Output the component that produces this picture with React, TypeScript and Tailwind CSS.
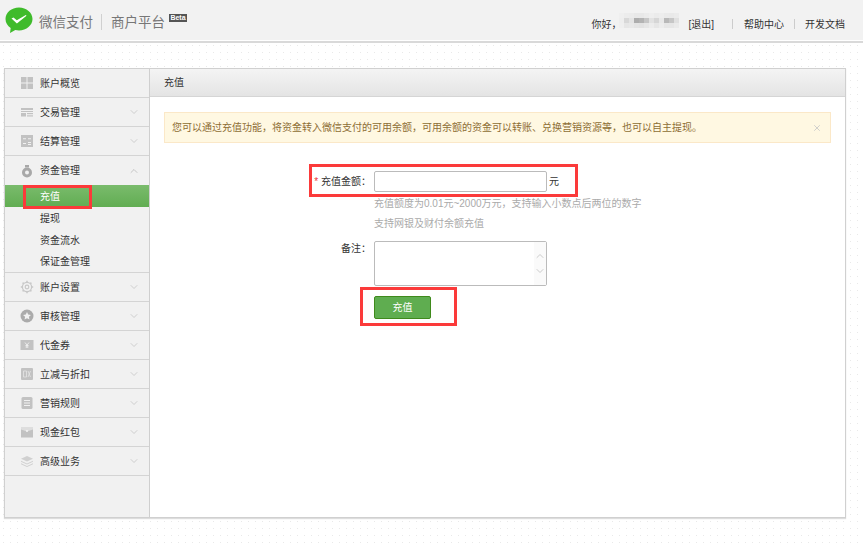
import { ChevronDown, ChevronUp, X } from 'lucide-react';
import type { ReactNode } from 'react';

const FONT = "font-['Liberation_Sans','Noto_Sans_CJK_SC',sans-serif]";

function Glyph({ children }: { children: ReactNode }) {
    return (
        <svg width="14" height="14" viewBox="0 0 14 14" fill="#c2c2c2" className="shrink-0">
            {children}
        </svg>
    );
}

const icons: Record<string, ReactNode> = {
    overview: (
        <Glyph>
            <rect x="1" y="1" width="5.5" height="5.5" />
            <rect x="7.5" y="1" width="5.5" height="5.5" />
            <rect x="1" y="7.5" width="5.5" height="5.5" />
            <rect x="7.5" y="7.5" width="5.5" height="5.5" />
        </Glyph>
    ),
    trade: (
        <Glyph>
            <rect x="1" y="3" width="12" height="2" />
            <rect x="1" y="6" width="12" height="1" />
            <rect x="1" y="8" width="5" height="3.5" />
            <rect x="7" y="8" width="6" height="1.2" />
            <rect x="7" y="10.3" width="6" height="1.2" />
        </Glyph>
    ),
    settle: (
        <Glyph>
            <rect x="1" y="1" width="12" height="12" />
            <path d="M3 4.2h3v1H3zM8 4.2h3v1H8zM8 8h3v1H8zM8 10h3v1H8zM3 9h3v1H3z" fill="#f1f1f1" />
        </Glyph>
    ),
    fund: (
        <Glyph>
            <circle cx="7" cy="8.5" r="5" fill="#a8a8a8" />
            <rect x="5" y="1" width="4" height="2.4" fill="#a8a8a8" />
            <circle cx="7" cy="8.5" r="2" fill="#f1f1f1" />
        </Glyph>
    ),
    account: (
        <svg width="14" height="14" viewBox="0 0 14 14" fill="none" stroke="#c8c8c8" strokeWidth="1.2" className="shrink-0">
            <circle cx="7" cy="7" r="4.6" />
            <circle cx="7" cy="7" r="1.8" />
            <path d="M7 .8v1.600M7 11.600v1.600M.8 7h1.600M11.600 7h1.600M2.600 2.600l1.100 1.100M10.300 10.300l1.100 1.100M2.600 11.400l1.100-1.100M10.300 3.700l1.100-1.100" strokeWidth="1.500" />
        </svg>
    ),
    audit: (
        <Glyph>
            <circle cx="7" cy="7" r="6.500" fill="#ababab" />
            <path d="M7 3l1.200 2.600 2.800.3-2.100 1.900.6 2.800L7 9.200 4.500 10.600l.6-2.800L3 5.900l2.800-.3z" fill="#f1f1f1" />
        </Glyph>
    ),
    coupon: (
        <Glyph>
            <rect x="0.500" y="2" width="13" height="10" />
            <path d="M5 4.500l2 2.500 2-2.500M7 7v3M5.500 7.500h3M5.500 9h3" stroke="#f1f1f1" strokeWidth="0.900" fill="none" />
        </Glyph>
    ),
    discount: (
        <Glyph>
            <rect x="1" y="1" width="12" height="12" rx="1" />
            <path d="M3.500 4h3v6h-3zM8 4l2.500 6M10.500 4L8 10" stroke="#e4e4e4" strokeWidth="0.800" fill="none" />
        </Glyph>
    ),
    rules: (
        <Glyph>
            <rect x="1.500" y="1" width="11" height="12" rx="1.500" />
            <path d="M4 4h6v1H4zM4 6.500h6v1H4zM4 9h6v1H4z" fill="#f1f1f1" />
        </Glyph>
    ),
    redpack: (
        <Glyph>
            <rect x="1" y="2" width="12" height="10.500" />
            <path d="M1 2h12v2.500L7 6.500 1 4.500z" fill="#dedede" />
            <circle cx="7" cy="6" r="0.900" fill="#f8f8f8" />
        </Glyph>
    ),
    advanced: (
        <svg width="14" height="14" viewBox="0 0 14 14" fill="#d0d0d0" className="shrink-0">
            <path d="M7 2l6 2.800-6 2.800-6-2.800z" />
            <path d="M1 6.800l6 2.800 6-2.800v1L7 10.600 1 7.800z" />
            <path d="M1 9.200L7 12l6-2.800v1L7 13 1 10.200z" />
        </svg>
    ),
};

const topMenu = [
    { icon: 'trade', label: '交易管理' },
    { icon: 'settle', label: '结算管理' },
];

const bottomMenu = [
    { icon: 'account', label: '账户设置' },
    { icon: 'audit', label: '审核管理' },
    { icon: 'coupon', label: '代金券' },
    { icon: 'discount', label: '立减与折扣' },
    { icon: 'rules', label: '营销规则' },
    { icon: 'redpack', label: '现金红包' },
    { icon: 'advanced', label: '高级业务' },
];

// mosaic over the account name
const blurRows = [
    ['bg-[#efefef]', 'bg-[#ececec]', 'bg-[#ebebeb]', 'bg-[#e8e8e8]', 'bg-[#e8e8e8]', 'bg-[#ebebeb]', 'bg-[#eeeeee]', 'bg-[#ebebeb]', 'bg-[#ededed]', 'bg-[#eaeaea]', 'bg-[#e9e9e9]', 'bg-[#ebebeb]'],
    ['bg-[#eeeeee]', 'bg-[#d8d8d8]', 'bg-[#e4e4e4]', 'bg-[#adadad]', 'bg-[#b3b3b3]', 'bg-[#c6c6c6]', 'bg-[#e2e2e2]', 'bg-[#d6d6d6]', 'bg-[#e8e8e8]', 'bg-[#b8b8b8]', 'bg-[#c6c6c6]', 'bg-[#e0e0e0]'],
    ['bg-[#efefef]', 'bg-[#e6e6e6]', 'bg-[#e8e8e8]', 'bg-[#e4e4e4]', 'bg-[#e2e2e2]', 'bg-[#e6e6e6]', 'bg-[#ececec]', 'bg-[#e6e6e6]', 'bg-[#ececec]', 'bg-[#e6e6e6]', 'bg-[#e6e6e6]', 'bg-[#eaeaea]'],
];

function MenuRow({ icon, label, open }: { icon: string; label: string; open?: boolean }) {
    return (
        <div className="h-[29px] flex items-center pl-[15px] pr-[9px] border-b border-[#d4d4d4] text-[10px] text-[#333]">
            <span className="w-[20px] flex">{icons[icon]}</span>
            <span className="flex-1">{label}</span>
            {open === undefined ? null : <ChevronDown size={12} strokeWidth={1} className="text-[#aaa]" />}
        </div>
    );
}

function Sidebar() {
    return (
        <aside className="w-[145px] shrink-0 bg-[#f1f1f1] border-r border-[#cfcfcf]">
            <MenuRow icon="overview" label="账户概览" />
            {topMenu.map((item) => (
                <MenuRow key={item.label} icon={item.icon} label={item.label} open={false} />
            ))}
            <div className="h-[29px] flex items-center pl-[15px] pr-[9px] text-[10px] text-[#333]">
                <span className="w-[20px] flex">{icons.fund}</span>
                <span className="flex-1">资金管理</span>
                <ChevronUp size={12} strokeWidth={1} className="text-[#999]" />
            </div>
            <div className="border-b border-[#d4d4d4] text-[10px] text-[#333]">
                <div className="relative h-[22px] flex items-center pl-[35px] text-white bg-gradient-to-b from-[#7abb6c] to-[#61ad52]">
                    充值
                    <div className="absolute left-[18px] top-0 w-[69px] h-[24px] border-[3px] border-[#fb3a3a]" />
                </div>
                <div className="h-[22px] flex items-center pl-[35px]">提现</div>
                <div className="h-[22px] flex items-center pl-[35px]">资金流水</div>
                <div className="h-[21px] flex items-center pl-[35px]">保证金管理</div>
            </div>
            {bottomMenu.map((item) => (
                <MenuRow key={item.label} icon={item.icon} label={item.label} open={false} />
            ))}
        </aside>
    );
}

function Header() {
    return (
        <header className="h-[43px] bg-[#f2f2f2] border-b-[2px] border-[#d9d9d9] shadow-[inset_0_-1px_0_#ffffff] flex items-center pl-[5px] pr-[18px]">
            <svg width="28" height="27" viewBox="0 0 28 27" className="shrink-0">
                <path d="M14 0.500C6.500 0.500 0.500 5.600 0.500 12c0 3.700 2 6.900 5.200 9l-.7 5 5.300-3c1.200.3 2.400.4 3.700.4 7.500 0 13.500-5.100 13.500-11.400S21.500.500 14 .500z" fill="#3fbb2b" />
                <path d="M6.500 11.500l2-1 3.300 2.800 9-5.300.7.700-9.600 7.800z" fill="#ffffff" />
            </svg>
            <span className="ml-[6px] mt-[5px] text-[13.5px] text-[#777]">微信支付</span>
            <span className="w-px h-[16px] bg-[#d0d0d0] mx-[8px] mt-[2px]" />
            <span className="ml-[1px] mt-[5px] text-[13.5px] text-[#777]">商户平台</span>
            <span className="ml-[4px] mb-[5px] h-[8px] w-[18px] bg-[#555] text-white text-[7px] leading-[8px] text-center font-bold">Beta</span>
            <div className="ml-auto mt-[7px] flex items-center text-[10px] text-[#333]">
                <span>你好，</span>
                <span className="flex flex-col w-[60px] h-[15px] ml-[-2px] mr-[9px] mt-[-7px]">
                    {blurRows.map((row, r) => (
                        <span key={r} className="flex flex-1">
                            {row.map((c, i) => (
                                <span key={i} className={`flex-1 ${c}`} />
                            ))}
                        </span>
                    ))}
                </span>
                <span>[退出]</span>
                <span className="w-px h-[10px] bg-[#ccc] ml-[18px] mr-[11px]" />
                <span>帮助中心</span>
                <span className="w-px h-[10px] bg-[#ccc] ml-[10px] mr-[10px]" />
                <span>开发文档</span>
            </div>
        </header>
    );
}

function Form() {
    return (
        <div className="relative ml-[150px] mt-[28px] text-[10px] text-[#333]">
            <div className="flex items-center h-[21px]">
                <label className="w-[74px] pr-[3px] text-right whitespace-nowrap">
                    <span className="text-[#e33]">* </span>充值金额：
                </label>
                <div className="w-[173px] h-[21px] bg-white border border-[#bbb] rounded-[2px]" />
                <span className="ml-[2px]">元</span>
            </div>
            <p className="ml-[74px] mt-[2px] text-[#aaa] leading-[20px]">充值额度为0.01元~2000万元，支持输入小数点后两位的数字</p>
            <p className="ml-[74px] text-[#aaa] leading-[20px]">支持网银及财付余额充值</p>
            <div className="flex items-start mt-[7px]">
                <label className="w-[74px] pr-[3px] text-right">备注：</label>
                <div className="w-[173px] h-[45px] bg-white border border-[#bbb] rounded-[2px] flex justify-end">
                    <div className="w-[12px] bg-[#fafafa] flex flex-col items-center justify-center gap-[3px] text-[#bbb]">
                        <ChevronUp size={12} strokeWidth={1.500} />
                        <ChevronDown size={12} strokeWidth={1.500} />
                    </div>
                </div>
            </div>
            <button className="block ml-[74px] mt-[10px] w-[57px] h-[23px] rounded-[2px] bg-[#5fad50] border border-[#3f8a1c] text-white text-[10px]">
                充值
            </button>
            <div className="absolute left-[9px] top-[-7px] w-[269px] h-[33px] border-[3px] border-[#fb3a3a]" />
            <div className="absolute left-[60px] top-[116px] w-[97px] h-[39px] border-[3px] border-[#fb3a3a]" />
        </div>
    );
}

export default function App() {
    return (
        <div className={`h-[547px] overflow-hidden bg-white bg-[radial-gradient(#e9e9e9_0.6px,transparent_0.6px)] bg-[length:7px_7px] ${FONT}`}>
            <Header />
            <main className="mt-[25px] ml-[4px] w-[842px] h-[450px] flex bg-white border border-[#d0d0d0] shadow-[0_1px_1px_#ddd]">
                <Sidebar />
                <section className="flex-1 min-w-0">
                    <div className="h-[28px] flex items-center pl-[14px] text-[10px] text-[#333] bg-gradient-to-b from-[#f4f4f4] to-[#e4e4e4] border-b border-[#d5d5d5]">
                        充值
                    </div>
                    <div className="mt-[15px] mx-[14px] h-[31px] flex items-center pl-[7px] pr-[8px] bg-[#fff8e2] border border-[#fbe8c8] text-[10px] text-[#8d6d34]">
                        <span className="flex-1">您可以通过充值功能，将资金转入微信支付的可用余额，可用余额的资金可以转账、兑换营销资源等，也可以自主提现。</span>
                        <X size={10} strokeWidth={2} className="text-[#c8c8c8]" />
                    </div>
                    <Form />
                </section>
            </main>
        </div>
    );
}
